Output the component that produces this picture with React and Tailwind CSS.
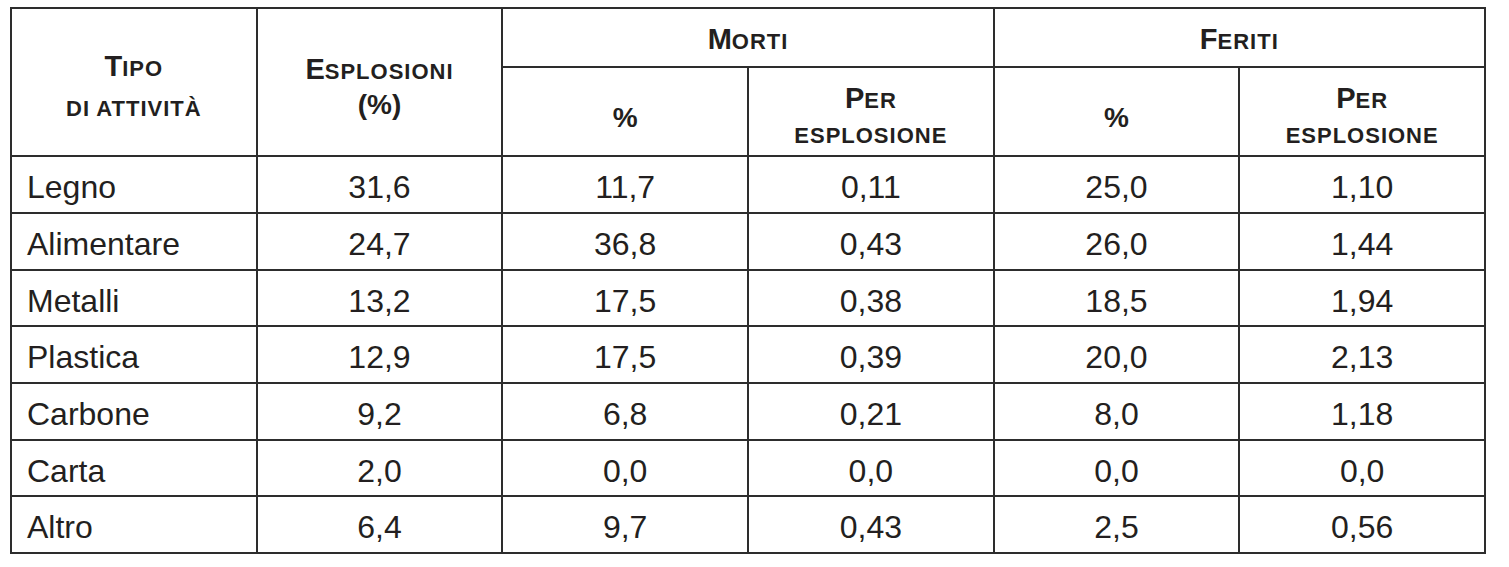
import React from "react";

const rows = [
  ["Legno", "31,6", "11,7", "0,11", "25,0", "1,10"],
  ["Alimentare", "24,7", "36,8", "0,43", "26,0", "1,44"],
  ["Metalli", "13,2", "17,5", "0,38", "18,5", "1,94"],
  ["Plastica", "12,9", "17,5", "0,39", "20,0", "2,13"],
  ["Carbone", "9,2", "6,8", "0,21", "8,0", "1,18"],
  ["Carta", "2,0", "0,0", "0,0", "0,0", "0,0"],
  ["Altro", "6,4", "9,7", "0,43", "2,5", "0,56"],
];

function SC({ big, small }) {
  return (
    <span className="whitespace-nowrap">
      <span className="text-[29px]">{big}</span>
      <span className="text-[22px] tracking-[1px]">{small}</span>
    </span>
  );
}

export default function App() {
  return (
    <div className="bg-white w-[1509px] h-[567px] pt-[7px] pl-[10px] font-['Liberation_Sans',Arial,sans-serif] text-[#231f20]">
      <div className="w-[1476px] bg-[#2d2d2d] p-[2px] grid grid-cols-6 gap-[2px] grid-rows-[57px_87px_55px_55px_54px_55px_55px_54px_55px]">
        <div className="row-span-2 bg-white flex flex-col items-center justify-center pt-[11px] font-bold leading-[38px]">
          <SC big="T" small="IPO" />
          <span className="text-[22px] tracking-[1px]">DI ATTIVITÀ</span>
        </div>
        <div className="row-span-2 bg-white flex flex-col items-center justify-center pt-[10px] font-bold leading-[31px]">
          <SC big="E" small="SPLOSIONI" />
          <span className="text-[28px]">(%)</span>
        </div>
        <div className="col-span-2 bg-white flex items-center justify-center pt-[5px] font-bold">
          <SC big="M" small="ORTI" />
        </div>
        <div className="col-span-2 bg-white flex items-center justify-center pt-[5px] font-bold">
          <SC big="F" small="ERITI" />
        </div>
        {[0, 1].map((i) => (
          <React.Fragment key={i}>
            <div className="bg-white flex items-center justify-center pt-[13px] font-bold text-[28px]">%</div>
            <div className="bg-white flex flex-col items-center justify-center pt-[10px] font-bold leading-[33px]">
              <SC big="P" small="ER" />
              <span className="text-[22px] tracking-[1px]">ESPLOSIONE</span>
            </div>
          </React.Fragment>
        ))}
        {rows.map((r) =>
          r.map((c, j) => (
            <div
              key={r[0] + j}
              className={
                "bg-white flex items-center pt-[5px] text-[32px] " +
                (j === 0 ? "justify-start pl-[15px]" : "justify-center")
              }
            >
              {c}
            </div>
          ))
        )}
      </div>
    </div>
  );
}
